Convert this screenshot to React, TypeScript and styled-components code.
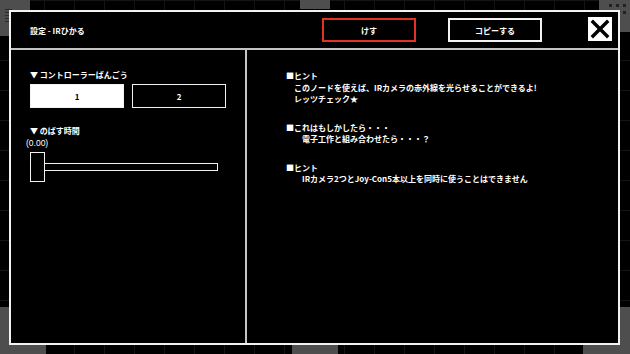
import React from 'react';
import styled, { createGlobalStyle } from 'styled-components';

const GlobalStyle = createGlobalStyle`
  html, body {
    margin: 0;
    padding: 0;
    background: #000;
  }
  body {
    font-family: "Noto Sans CJK JP", "Noto Sans", sans-serif;
    color: #fff;
  }
`;

const Canvas = styled.div`
  position: relative;
  width: 630px;
  height: 354px;
  overflow: hidden;
  background-color: #000;
  background-image:
    linear-gradient(to right, #141414 1px, transparent 1px),
    linear-gradient(to bottom, #141414 1px, transparent 1px);
  background-size: 30px 30px;
  background-position: 14px 0;
`;

// nodes of the editor that sit behind the dialog
const Node = styled.div<{ $x: number; $y: number; $w: number; $h: number }>`
  position: absolute;
  left: ${p => p.$x}px;
  top: ${p => p.$y}px;
  width: ${p => p.$w}px;
  height: ${p => p.$h}px;
  background: #4e4e4e;
`;

const MenuLines = styled.div`
  position: absolute;
  left: 5px;
  top: 9px;
  width: 7px;
  display: flex;
  flex-direction: column;
  gap: 2px;

  span {
    display: block;
    height: 1px;
    background: #2a2a2a;
  }
`;

const Dots = styled.div`
  position: absolute;
  right: 4px;
  top: 4px;
  display: grid;
  grid-template-columns: repeat(3, 3px);
  gap: 4px;

  span {
    width: 3px;
    height: 3px;
    background: #222;
  }
`;

const Dialog = styled.section`
  position: absolute;
  left: 9px;
  top: 10px;
  width: 611px;
  height: 335px;
  box-sizing: border-box;
  border: 2px solid #f2f2f2;
  background: #000;
  display: flex;
  flex-direction: column;
`;

const Header = styled.header`
  height: 36px;
  flex: none;
  display: flex;
  align-items: center;
  padding: 0 6px 0 19px;
  border-bottom: 2px solid #c4c4c4;
`;

const Title = styled.h1`
  margin: 0;
  flex: 1;
  font-size: 8px;
  font-weight: 700;
  line-height: 12px;
  margin-top: 1px;
`;

const HeaderButton = styled.button<{ $danger?: boolean }>`
  width: 94px;
  height: 24px;
  box-sizing: border-box;
  margin-left: ${p => (p.$danger ? '0' : '32px')};
  border: 2px solid ${p => (p.$danger ? '#e03324' : '#f2f2f2')};
  background: #000;
  color: #fff;
  font-family: inherit;
  font-size: 8px;
  font-weight: 700;
  padding: 0;
`;

const CloseButton = styled.button`
  width: 24px;
  height: 24px;
  margin-left: 46px;
  margin-top: -2px;
  border: none;
  padding: 0;
  background: #fff;
  display: flex;
  align-items: center;
  justify-content: center;
`;

const Body = styled.div`
  flex: 1;
  display: flex;
`;

const LeftPane = styled.div`
  width: 236px;
  flex: none;
  box-sizing: border-box;
  border-right: 2px solid #c4c4c4;
  padding: 19px 0 0 19px;
`;

const RightPane = styled.div`
  flex: 1;
  padding: 20px 0 0 39px;
`;

const Label = styled.div<{ $gap?: number }>`
  font-size: 8px;
  font-weight: 700;
  line-height: 12px;
  margin-top: ${p => p.$gap ?? 0}px;
`;

const Value = styled.div`
  font-family: "Liberation Sans", sans-serif;
  font-size: 8.5px;
  line-height: 12px;
  margin-left: -4px;
`;

const Choices = styled.div`
  display: flex;
  gap: 8px;
  margin-top: 3px;
`;

const Choice = styled.button<{ $active?: boolean }>`
  width: 94px;
  height: 24px;
  box-sizing: border-box;
  padding: 0;
  border: 1.5px solid #f2f2f2;
  background: ${p => (p.$active ? '#fff' : '#000')};
  color: ${p => (p.$active ? '#000' : '#fff')};
  font-family: inherit;
  font-size: 8px;
  font-weight: 700;
`;

const Slider = styled.div`
  display: flex;
  align-items: center;
  margin-top: 3px;
`;

const Thumb = styled.div`
  width: 15px;
  height: 30px;
  box-sizing: border-box;
  border: 1.5px solid #f2f2f2;
  background: #000;
  flex: none;
`;

const Track = styled.div`
  width: 173px;
  height: 8px;
  box-sizing: border-box;
  border: 1.5px solid #f2f2f2;
  border-left: none;
`;

const Hint = styled.div`
  & + & {
    margin-top: 17px;
  }
`;

const HintLine = styled.div<{ $indent?: number }>`
  font-size: 8px;
  font-weight: 700;
  line-height: 11.5px;
  padding-left: ${p => p.$indent ?? 0}px;
  white-space: nowrap;
`;

const hints = [
  {
    title: '■ヒント',
    indent: 8,
    lines: ['このノードを使えば、IRカメラの赤外線を光らせることができるよ!', 'レッツチェック★'],
  },
  {
    title: '■これはもしかしたら・・・',
    indent: 16,
    lines: ['電子工作と組み合わせたら・・・？'],
  },
  {
    title: '■ヒント',
    indent: 16,
    lines: ['IRカメラ2つとJoy-Con5本以上を同時に使うことはできません'],
  },
];

export default function App() {
  return (
    <Canvas>
      <GlobalStyle />
      <Node $x={0} $y={0} $w={30} $h={36}>
        <MenuLines>
          <span /><span /><span /><span /><span />
        </MenuLines>
      </Node>
      <Node $x={300} $y={0} $w={30} $h={9} />
      <Node $x={599} $y={0} $w={31} $h={32}>
        <Dots>
          <span /><span /><span /><span /><span /><span />
        </Dots>
      </Node>
      <Node $x={0} $y={307} $w={46} $h={47} />
      <Node $x={292} $y={330} $w={46} $h={24} />
      <Node $x={583} $y={307} $w={47} $h={47} />

      <Dialog>
        <Header>
          <Title>設定 - IRひかる</Title>
          <HeaderButton $danger>けす</HeaderButton>
          <HeaderButton>コピーする</HeaderButton>
          <CloseButton aria-label="close">
            <svg width="20" height="20" viewBox="0 0 20 20">
              <path d="M3 3 L17 17 M17 3 L3 17" stroke="#000" strokeWidth="3.4" strokeLinecap="square" />
            </svg>
          </CloseButton>
        </Header>
        <Body>
          <LeftPane>
            <Label>▼ コントローラーばんごう</Label>
            <Choices>
              <Choice $active>1</Choice>
              <Choice>2</Choice>
            </Choices>
            <Label $gap={17}>▼ のばす時間</Label>
            <Value>(0.00)</Value>
            <Slider>
              <Thumb />
              <Track />
            </Slider>
          </LeftPane>
          <RightPane>
            {hints.map((h, i) => (
              <Hint key={i}>
                <HintLine>{h.title}</HintLine>
                {h.lines.map((l, j) => (
                  <HintLine key={j} $indent={h.indent}>{l}</HintLine>
                ))}
              </Hint>
            ))}
          </RightPane>
        </Body>
      </Dialog>
    </Canvas>
  );
}
